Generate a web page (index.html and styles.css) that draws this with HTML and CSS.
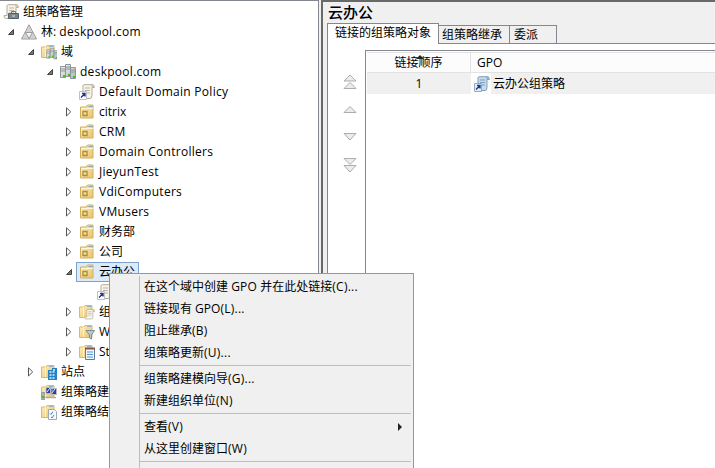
FILE: index.html
```html
<!DOCTYPE html>
<html lang="zh-CN">
<head>
<meta charset="utf-8">
<title>组策略管理</title>
<link rel="stylesheet" href="styles.css">
</head>
<body>
<svg class="defs" width="0" height="0">
  <defs>
    <linearGradient id="gold" x2="1" y2="1"><stop stop-color="#fff0bd"/><stop offset="1" stop-color="#e8c169"/></linearGradient>
    <linearGradient id="steel" x2="1" y2="1"><stop stop-color="#f4f4f4"/><stop offset="1" stop-color="#b5b8b8"/></linearGradient>
    <symbol id="closed" viewBox="0 0 8 10"><path d="M1.5 .8V9L5.7 4.9Z" fill="#fff" stroke="#555"/></symbol>
    <symbol id="open" viewBox="0 0 8 10"><path d="M6.500 2.500v5H1.500Z" fill="#777" stroke="#444"/></symbol>
    <symbol id="scroll" viewBox="0 0 16 16"><path d="M4 1.500Q4 .7 6 .7h8Q15.300 .7 15.300 3.500H13v8q0 3-2 3H2.500Q1 14.500 1 11.500h3Z" fill="#f8f4e8" stroke="#b3ab99"/><path d="M13 1v2h2M6 4h5M6 6.500h5M6 9h5" fill="none" stroke="#b9b3a5"/></symbol>
    <symbol id="link" viewBox="0 0 16 16"><use href="#scroll"/><path d="M.5 7.500h7v8h-7Z" fill="#fff" stroke="#bcc0c8"/><path d="M2 13.500 5.500 10M3 9.500h3v3" fill="none" stroke="#26328b" stroke-width="1.400"/></symbol>
    <symbol id="bluelink" viewBox="0 0 16 16"><path d="M4 1.500Q4 .7 6 .7h8Q15.300 .7 15.300 3.500H13v8q0 3-2 3H2.500Q1 14.500 1 11.500h3Z" fill="#c5dcee" stroke="#7f9db8"/><path d="M13 1v2h2M6 4h5M6 6.500h5M6 9h5" fill="none" stroke="#7fa0bf"/><path d="M.5 7.500h7v8h-7Z" fill="#e2effa" stroke="#90aac4"/><path d="M2 13.500 5.500 10M3 9.500h3v3" fill="none" stroke="#1b3c8c" stroke-width="1.400"/></symbol>
    <symbol id="folder" viewBox="0 0 16 16"><path d="M.5 3h4.500l1-1.500h7V13.500H.5Z" fill="url(#gold)" stroke="#dcb969"/><path d="M4.500 3v10" stroke="#fff3cc"/><path d="M8 2.500h4" stroke="#8bb4cf"/></symbol>
    <symbol id="ou" viewBox="0 0 16 16"><path d="M1.500 3h6l1-2h5.500v13H1.500Z" fill="url(#gold)" stroke="#d4ae58"/><path d="M2 4.500h12" stroke="#fff6d6"/><path d="M9.500 2.500h4" stroke="#7ba9c8"/><path d="M4 7.500h4v4H4Z" fill="#f8df91" stroke="#a88c42" stroke-width="1.300"/></symbol>
    <symbol id="servers" viewBox="0 0 16 16"><path d="M5.500.5h5v12h-5ZM.5 2.500h5v11h-5ZM10.500 3.500h5v11h-5Z" fill="url(#steel)" stroke="#8d9698"/><path d="M6 3h4M6 5h4M1 5h4M1 7h4M11 6h4M11 8h4" stroke="#87959a"/><path d="M3 11h2v2H3ZM8 10h2v2H8ZM13 12h2v2h-2Z" fill="#3cc414"/></symbol>
  </defs>
</svg>
<div class="window">
  <section class="tree">
    <div class="row root"><svg class="icon"><use href="#scroll"/><path d="M5.500 9.500h10v5h-10Z" fill="#7c8894" stroke="#56616c"/><path d="M8.500 9v-1.500h4v1.500M6 12h9" fill="none" stroke="#6c767f"/><path d="M9 12h3" stroke="#e2e8ec"/></svg><span>组策略管理</span></div>
    <div class="row l1"><svg class="arrow"><use href="#open"/></svg><svg class="icon"><path d="M8 .8 15.500 15H.5Z" fill="#d6d6d6" stroke="#9b9b9b"/><path d="M8 2.500 4.700 8.500h6.600ZM4 10 1.800 14.300H7ZM12 10 9 14.300h5.200Z" fill="#d2d2d2"/><path d="M4.500 8.500 8 14.500 11.500 8.500Z" fill="#f4f4f4" stroke="#888" stroke-width=".8"/></svg><span>林: <b class="en">deskpool.com</b></span></div>
    <div class="row l2"><svg class="arrow"><use href="#open"/></svg><svg class="icon"><use href="#folder"/><use href="#servers" x="5" y="4" width="12" height="12"/></svg><span>域</span></div>
    <div class="row l3"><svg class="arrow"><use href="#open"/></svg><svg class="icon"><use href="#servers"/></svg><span class="en">deskpool.com</span></div>
    <div class="row l4"><i class="arrow"></i><svg class="icon"><use href="#link"/></svg><span class="en">Default Domain Policy</span></div>
    <div class="row l4"><svg class="arrow"><use href="#closed"/></svg><svg class="icon"><use href="#ou"/></svg><span>citrix</span></div>
    <div class="row l4"><svg class="arrow"><use href="#closed"/></svg><svg class="icon"><use href="#ou"/></svg><span class="en">CRM</span></div>
    <div class="row l4"><svg class="arrow"><use href="#closed"/></svg><svg class="icon"><use href="#ou"/></svg><span class="en">Domain Controllers</span></div>
    <div class="row l4"><svg class="arrow"><use href="#closed"/></svg><svg class="icon"><use href="#ou"/></svg><span class="en">JieyunTest</span></div>
    <div class="row l4"><svg class="arrow"><use href="#closed"/></svg><svg class="icon"><use href="#ou"/></svg><span class="en">VdiComputers</span></div>
    <div class="row l4"><svg class="arrow"><use href="#closed"/></svg><svg class="icon"><use href="#ou"/></svg><span class="en">VMusers</span></div>
    <div class="row l4"><svg class="arrow"><use href="#closed"/></svg><svg class="icon"><use href="#ou"/></svg><span>财务部</span></div>
    <div class="row l4"><svg class="arrow"><use href="#closed"/></svg><svg class="icon"><use href="#ou"/></svg><span>公司</span></div>
    <div class="row l4"><svg class="arrow"><use href="#open"/></svg><div class="selected"><svg class="icon"><use href="#ou"/></svg><span>云办公</span></div></div>
    <div class="row l5"><i class="arrow"></i><svg class="icon"><use href="#link"/></svg></div>
    <div class="row l4"><svg class="arrow"><use href="#closed"/></svg><svg class="icon"><use href="#folder"/><use href="#scroll" x="5" y="5" width="11" height="11"/></svg><span>组</span></div>
    <div class="row l4"><svg class="arrow"><use href="#closed"/></svg><svg class="icon"><use href="#folder"/><path d="M7 6.500h8.500L12.500 11v4l-2-1v-3Z" fill="#b5c9d4" stroke="#7c909c"/></svg><span>W</span></div>
    <div class="row l4"><svg class="arrow"><use href="#closed"/></svg><svg class="icon"><use href="#folder"/><path d="M6.500 4.500h9v11h-9Z" fill="#eef6fc" stroke="#5b7c96"/><path d="M6 4.500h10" stroke="#8a5348" stroke-width="2"/><path d="M8 8h6M8 10.500h6M8 13h6" stroke="#5a93c2"/></svg><span>St</span></div>
    <div class="row l2"><svg class="arrow"><use href="#closed"/></svg><svg class="icon"><use href="#folder"/><path d="M7 6h4V4h5v12H7Z" fill="#2582c2"/><path d="M8.500 8h6M8.500 11h6M12 6h3M8.500 14h6" stroke="#d8effc" stroke-width="1.500" stroke-dasharray="2 1"/></svg><span>站点</span></div>
    <div class="row l2"><i class="arrow"></i><svg class="icon"><use href="#folder"/><path d="M5 3.500h6v6H5ZM9.500 4.500h6v6h-6Z" fill="#263fae" stroke="#bbb"/><path d="M5 13.500h5M10 13.500h5" stroke="#aaa" stroke-width="1.500"/><path d="M.5 8.500h3v7h-3Z" fill="#a9bfa9" stroke="#999"/><path d="M1 12h2v2H1Z" fill="#3cc414"/><path d="m6 8 3-4M11 9l3-4" stroke="#d5e7ff"/></svg><span>组策略建</span></div>
    <div class="row l2"><i class="arrow"></i><svg class="icon"><use href="#folder"/><path d="M7.500 5.500h6l2 2v8h-8Z" fill="#f7fbff" stroke="#9daab6"/><path d="m9 9.500 1 1 2-3M10 13l1 1 2-3" fill="none" stroke="#477fb0"/></svg><span>组策略结</span></div>
  </section>
  <main class="details">
    <h1>云办公</h1>
    <nav class="tabs"><div class="tab active">链接的组策略对象</div><div class="tab inherit">组策略继承</div><div class="tab delegate">委派</div><div class="rest"></div></nav>
    <div class="page">
      <div class="order">
        <svg width="16" height="100" viewBox="0 0 16 100"><g fill="#ececec" stroke="#adadad"><path d="M8 1 14 7H2ZM8 8.500l6 6H2ZM8 32.500l6 6H2ZM2 59.500h12L8 66ZM2 84.500h12l-6 6ZM2 91.500h12l-6 6.500Z"/></g></svg>
      </div>
      <div class="list">
        <div class="head"><div class="num">链接顺序<i class="sort"></i></div><div class="gpo">GPO</div></div>
        <div class="item"><div class="num">1</div><svg class="icon blue"><use href="#bluelink"/></svg><div class="name">云办公组策略</div></div>
      </div>
    </div>
  </main>
  <div class="menu">
    <div class="mi">在这个域中创建 <b class="gap">GPO</b> 并在此处链接<b class="gap">(C)...</b></div>
    <div class="mi">链接现有 GPO<b class="gap">(L)...</b></div>
    <div class="mi">阻止继承<b class="gap">(B)</b></div>
    <div class="mi">组策略更新<b class="gap">(U)...</b></div>
    <hr>
    <div class="mi">组策略建模向导<b class="gap">(G)...</b></div>
    <div class="mi">新建组织单位<b class="gap">(N)</b></div>
    <hr>
    <div class="mi sub">查看<b class="gap">(V)</b></div>
    <div class="mi">从这里创建窗口<b class="gap">(W)</b></div>
    <hr>
  </div>
</div>
</body>
</html>
```
FILE: styles.css
```css
* { box-sizing: border-box; }
body { margin: 0; font: 12px/20px "Open Sans", "Noto Sans CJK SC", sans-serif; color: #000; }
b { font-weight: normal; }
.defs { display: block; height: 0; }
.window { position: relative; width: 715px; height: 468px; overflow: hidden; display: flex; background: #f0f0f0; }
.tree { width: 319px; height: 468px; border-top: 1px solid #828790; border-right: 1px solid #828790; background: #fff; padding-top: 1px; }
.row { display: flex; align-items: center; height: 20px; white-space: nowrap; }
.row span { margin-left: 4px; }
.en { letter-spacing: .28px; }
.gap { letter-spacing: .25px; }
.icon { width: 16px; height: 16px; flex: none; }
.arrow { width: 8px; height: 10px; flex: none; margin-right: 6px; }
.root { padding-left: 3px; }
.l1 { padding-left: 7px; }
.l2 { padding-left: 27px; }
.l3 { padding-left: 46px; }
.l4 { padding-left: 65px; }
.l5 { padding-left: 83px; }
.selected { display: flex; align-items: center; width: 63px; height: 20px; margin-left: -3px; padding-left: 2px; border: 1px solid #7da2ce; background: #dcebfc; }
.details { flex: 1; margin-left: 2px; border-left: 2px solid #696969; border-top: 2px solid #696969; padding-left: 4px; display: flex; flex-direction: column; }
h1 { margin: 0 0 0 1px; font-size: 15px; line-height: 21px; height: 21px; font-weight: 500; }
.tabs { display: flex; align-items: flex-end; height: 21px; }
.tab { height: 19px; line-height: 18px; padding-left: 4px; border: 1px solid #828790; border-left: 0; white-space: nowrap; }
.tab.active { width: 112px; height: 21px; padding-left: 7px; background: #fff; border-left: 1px solid #828790; border-bottom: 0; }
.inherit { width: 71px; padding-left: 3px; }
.delegate { width: 47px; }
.rest { flex: 1; border-bottom: 1px solid #828790; }
.page { flex: 1; display: flex; background: #fff; border-left: 1px solid #828790; padding-top: 6px; }
.order { width: 37px; padding: 24px 0 0 14px; }
.list { flex: 1; border-left: 1px solid #828790; border-top: 1px solid #828790; padding: 1px 0 0 1px; }
.head { display: flex; height: 21px; background: #fcfcfc; border-top: 1px solid #e2e2e2; border-bottom: 1px solid #e2e2e2; }
.num { position: relative; width: 104px; text-align: center; }
.head .num { border-right: 1px solid #e2e2e2; }
.sort { position: absolute; left: 49px; top: 2px; border: 4px solid transparent; border-top: 0; border-bottom-color: #222; }
.gpo { padding-left: 6px; }
.item { display: flex; align-items: center; height: 21px; background: linear-gradient(90deg, #f0f0f0 104px, #fff 104px 124px, #f0f0f0 124px); }
.blue { margin: 0 3px; }
.name { white-space: nowrap; }
.menu { position: absolute; left: 109px; top: 273px; width: 305px; height: 210px; background: linear-gradient(90deg, transparent 29px, #bdbdbd 29px 30px, transparent 30px) 0 2px no-repeat #f0f0f0; border: 1px solid #979797; padding: 2px; }
.mi { position: relative; height: 22px; line-height: 22px; padding-left: 32px; white-space: nowrap; }
.menu hr { height: 1px; margin: 1px 0 2px 28px; border: 0; background: #bdbdbd; }
.sub::after { content: ""; position: absolute; right: 9px; top: 7px; border: 4px solid transparent; border-right: 0; border-left-color: #222; }
```
